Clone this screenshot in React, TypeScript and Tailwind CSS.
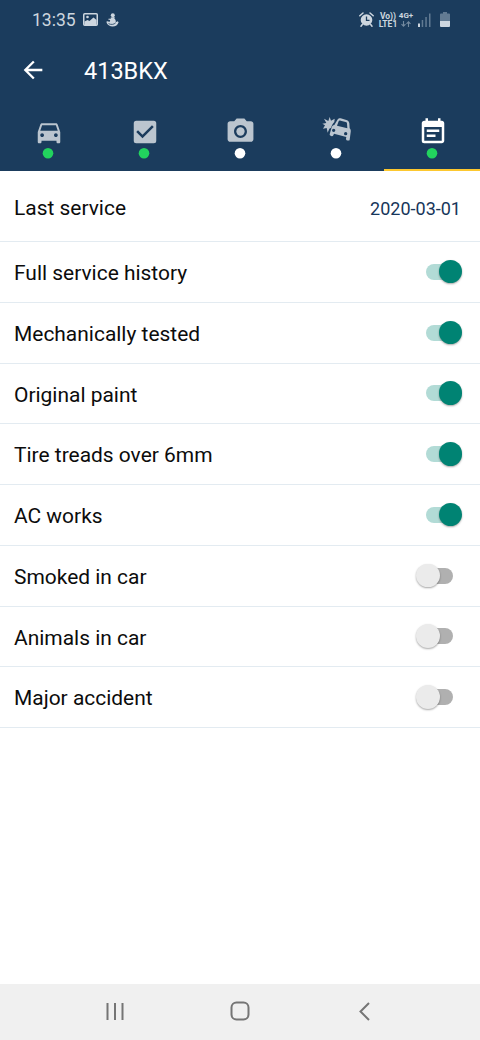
import React, { useState } from 'react';
import { MdArrowBack, MdCheckBox, MdDirectionsCar, MdEventNote, MdPhotoCamera } from 'react-icons/md';
import clsx from 'clsx';

interface Option {
  label: string;
  value: boolean;
}

const initialOptions: Option[] = [
  { label: 'Full service history', value: true },
  { label: 'Mechanically tested', value: true },
  { label: 'Original paint', value: true },
  { label: 'Tire treads over 6mm', value: true },
  { label: 'AC works', value: true },
  { label: 'Smoked in car', value: false },
  { label: 'Animals in car', value: false },
  { label: 'Major accident', value: false },
];

const CrashIcon = () => (
  <svg className="w-[29px] h-[25px] mb-[5px]" viewBox="0 0 87 75" fill="currentColor">
    <path d="M1 20l12-2-7-13 13 7 4-12 4 11 11-6-1 10c-5 5-7 10-10 17l-5 3-5 12-3-14-11 2 6-10z" />
    <path
      fillRule="evenodd"
      d="M46 9c2-4 5-6 10-5l17 5c6 2 8 5 9 10l1 15c3 3 4 7 3 12l-3 22c-1 5-12 3-11-3l1-5-37-10-2 5c-2 5-12 2-11-3l6-21c1-4 4-7 8-7zM50 13l-5 13 31 8-1-14c0-3-1-4-4-5l-15-4c-3-1-5-1-6 2zM35 35a5 5 0 1 0 0 10 5 5 0 1 0 0-10zM71 45a5 5 0 1 0 0 10 5 5 0 1 0 0-10z"
    />
  </svg>
);

const tabs = [
  { id: 'car', icon: <MdDirectionsCar size={30} />, done: true },
  { id: 'checks', icon: <MdCheckBox size={30} />, done: true },
  { id: 'photos', icon: <MdPhotoCamera size={31} />, done: false },
  { id: 'damage', icon: <CrashIcon />, done: false },
  { id: 'service', icon: <MdEventNote size={30} />, done: true },
];

const StatusBar = () => (
  <div className="h-[39px] flex items-center justify-between pl-8 pr-[30px] text-[#cdd6df]">
    <div className="flex items-center">
      <span className="text-[17.5px] leading-none w-[43px] pt-[2px]">13:35</span>
      <svg className="ml-2 w-[15px] h-[13px]" viewBox="0 0 15 13">
        <rect x="0.75" y="0.75" width="13.5" height="11.5" rx="1" fill="none" stroke="currentColor" strokeWidth="1.5" />
        <path d="M1.5 12V8.5l3-1.5 2 1 4-3.5 3 2.5V12z" fill="currentColor" />
        <circle cx="4.5" cy="4" r="1.3" fill="currentColor" />
      </svg>
      <svg className="ml-2 w-[13px] h-[14px]" viewBox="0 0 13 14" fill="currentColor">
        <circle cx="6.8" cy="2.3" r="2" />
        <path d="M4.7 4.5l3.6-.6c.7.5.5 1.2 0 1.7 1.3.9 1.8 2.4 1.4 3.7l1.9-1.1 1 1c-.7 2.7-3.1 4.4-6 4.4-2.8 0-4.7-1.4-5.9-3.5L.5 8.6l1.3-.4 1.7.8.7-1.9-2.1-.7.8-.8 1.7.3z" />
        <path d="M2.5 10.6c2.4 1.3 5.3 1.1 7.2-.8" fill="none" stroke="#1b3c5d" strokeWidth="0.8" />
      </svg>
    </div>
    <div className="flex items-center">
      <svg className="w-[15px] h-[15px] mr-[1px]" viewBox="0 0 15 15">
        <circle cx="7.5" cy="8" r="5.8" fill="currentColor" />
        <path d="M.8 3.8L4 1M14.2 3.8L11 1M3.3 12.5L2 14.2M11.7 12.5l1.3 1.7" stroke="currentColor" strokeWidth="1.5" strokeLinecap="round" />
        <path d="M7.5 4.5v3.8h3" fill="none" stroke="#1b3c5d" strokeWidth="1.3" />
      </svg>
      <div className="ml-[4px] w-[18px] flex flex-col items-center font-bold text-[8.5px] leading-[8px] whitespace-nowrap">
        <span>Vo))</span>
        <span>LTE1</span>
      </div>
      <div className="ml-[2px] mr-[1px] w-[14px] flex flex-col items-center font-bold text-[8px] leading-[8px]">
        <span>4G+</span>
        <svg className="w-[10px] h-[8px]" viewBox="0 0 10 8" fill="none" stroke="#748a9f" strokeWidth="1.1">
          <path d="M2.5 1v5M.5 4.2l2 2 2-2M7.5 7V2M5.5 3.8l2-2 2 2" />
        </svg>
      </div>
      <svg className="ml-[4px] w-[13px] h-[14px]" viewBox="0 0 13 14">
        <rect x="0" y="10.5" width="2" height="3.5" fill="currentColor" />
        <rect x="3.7" y="7" width="1.5" height="7" fill="#627b93" />
        <rect x="7.3" y="4" width="1.5" height="10" fill="#627b93" />
        <rect x="11" y="0.5" width="1.5" height="13.5" fill="#627b93" />
      </svg>
      <svg className="ml-[9px] w-[10px] h-[15px]" viewBox="0 0 10 15">
        <path d="M3 0h4v1.5h2q1 0 1 1V9H0V2.5q0-1 1-1h2z" fill="#627b93" />
        <path d="M0 9h10v5q0 1-1 1H1q-1 0-1-1z" fill="currentColor" />
      </svg>
    </div>
  </div>
);

const Switch = ({ checked, onChange }: { checked: boolean; onChange: () => void }) => (
  <button type="button" role="switch" aria-checked={checked} onClick={onChange} className="relative w-[46px] h-6 flex items-center justify-center">
    <span className={clsx('w-[27px] h-4 rounded-full', checked ? 'bg-[#b2dbd6]' : 'bg-[#b0b0b0]')} />
    <span
      className={clsx(
        'absolute top-0 size-[23.5px] rounded-full shadow-[0_1px_2px_rgba(0,0,0,0.35)]',
        checked ? 'right-0 bg-[#008373]' : 'left-0 bg-[#ebebeb]'
      )}
    />
  </button>
);

const ServicePage = () => {
  const [options, setOptions] = useState<Option[]>(initialOptions);
  const [activeTab, setActiveTab] = useState('service');

  const toggleOption = (label: string) => {
    setOptions(options.map((o) => (o.label === label ? { ...o, value: !o.value } : o)));
  };

  return (
    <div className="w-[480px] h-[1040px] flex flex-col bg-white font-[Roboto,sans-serif] overflow-hidden">
      <header className="h-[171px] bg-[#1b3c5d] flex flex-col shrink-0">
        <StatusBar />
        <div className="h-[61px] flex items-center text-white pl-[19px]">
          <MdArrowBack size={28} />
          <h1 className="ml-[37px] pt-[4px] text-[23.5px] leading-none">413BKX</h1>
        </div>
        <nav className="flex-1 grid grid-cols-5">
          {tabs.map((tab) => (
            <button
              key={tab.id}
              type="button"
              onClick={() => setActiveTab(tab.id)}
              className={clsx(
                'flex flex-col items-center justify-start pt-4 border-b-2',
                tab.id === activeTab ? 'text-white border-[#fdc82f]' : 'text-[#bbc5cf] border-transparent'
              )}
            >
              <span className="h-[31px] pl-[1.5px] flex items-center justify-center">{tab.icon}</span>
              <svg className="size-[12px]" viewBox="0 0 12 12">
                <circle cx="6" cy="6.3" r="5.3" fill={tab.done ? '#22d35e' : '#fff'} />
              </svg>
            </button>
          ))}
        </nav>
      </header>

      <main className="flex-1 text-[20.95px] text-[#0c0c0c]">
        <div className="h-[71px] pl-[14px] pr-[19px] flex items-center justify-between border-b-[1.5px] border-[#e3ebf1]">
          <span className="pt-[5px]">Last service</span>
          <span className="text-[18px] text-[#17365a] pt-[4px]">2020-03-01</span>
        </div>
        {options.map((option) => (
          <div key={option.label} className="h-[60.75px] pl-[14px] pr-[18px] flex items-center justify-between border-b-[1.5px] border-[#e3ebf1]">
            <span className="pt-[4px]">{option.label}</span>
            <Switch checked={option.value} onChange={() => toggleOption(option.label)} />
          </div>
        ))}
      </main>

      <footer className="h-14 shrink-0 bg-[#f0f0f0] flex items-center justify-between pl-[106px] pr-[110px] pb-[2px] text-[#757575]">
        <svg className="w-[18px] h-[19px]" viewBox="0 0 18 19" fill="none" stroke="currentColor" strokeWidth="2">
          <path d="M1.5 1v17M9 1v17M16.5 1v17" />
        </svg>
        <svg className="w-[20px] h-[20px] mr-[4px]" viewBox="0 0 20 20" fill="none" stroke="currentColor" strokeWidth="2">
          <rect x="1.5" y="1.5" width="17" height="17" rx="5" />
        </svg>
        <svg className="w-[11px] h-[19px]" viewBox="0 0 11 19" fill="none" stroke="currentColor" strokeWidth="2">
          <path d="M10 1L1.5 9.5 10 18" />
        </svg>
      </footer>
    </div>
  );
};

export default ServicePage;
